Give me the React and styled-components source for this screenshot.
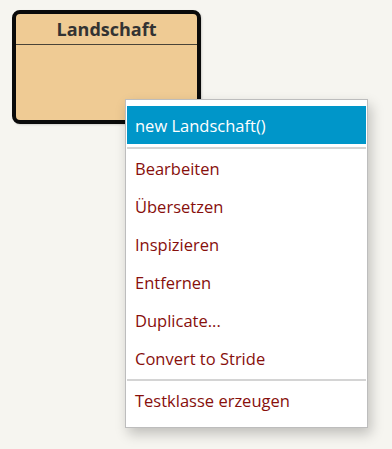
import React from 'react'
import styled, { createGlobalStyle } from 'styled-components'

const Global = createGlobalStyle`
  html, body { margin: 0; padding: 0; background: #f6f5f0; }
  body { font-family: "Open Sans", "Noto Sans", sans-serif; }
`

const items = ['Bearbeiten', 'Übersetzen', 'Inspizieren', 'Entfernen', 'Duplicate...', 'Convert to Stride']

export default function App() {
  return (
    <Canvas>
      <Global />
      <ClassBox>
        <ClassName>Landschaft</ClassName>
        <ClassBody>
          <Handle width="8" height="8" viewBox="0 0 8 8">
            <path d="M7 1 L1 7 M7 4 L4 7" stroke="#333" strokeWidth="1" />
          </Handle>
        </ClassBody>
      </ClassBox>
      <Menu>
        <Item $active>new Landschaft()</Item>
        <Sep $top={3} />
        {items.map(t => <Item key={t}>{t}</Item>)}
        <Sep $top={2} />
        <Item>Testklasse erzeugen</Item>
      </Menu>
    </Canvas>
  )
}

const Canvas = styled.div`
  position: relative;
  width: 392px;
  height: 449px;
  overflow: hidden;
`

const ClassBox = styled.div`
  position: absolute;
  left: 12px;
  top: 10px;
  width: 189px;
  height: 114px;
  box-sizing: border-box;
  border: 4px solid #0a0a0a;
  border-radius: 8px;
  background: #efcb94;
  display: flex;
  flex-direction: column;
  box-shadow: 1px 1px 2px rgba(0,0,0,0.15);
`

const ClassName = styled.div`
  height: 30px;
  border-bottom: 1px solid #4a4438;
  display: flex;
  align-items: center;
  justify-content: center;
  font-family: "Open Sans", sans-serif;
  font-weight: 700;
  font-size: 18px;
  color: #333333;
`

const ClassBody = styled.div`
  flex: 1;
  position: relative;
`

const Handle = styled.svg`
  position: absolute;
  right: 1px;
  bottom: 1px;
`

const Menu = styled.div`
  position: absolute;
  left: 125px;
  top: 99px;
  width: 243px;
  box-sizing: border-box;
  border: 1px solid #bdbdbd;
  background: #fff;
  padding: 6px 1px 8px;
  box-shadow: 3px 6px 12px rgba(0,0,0,0.22);
  display: flex;
  flex-direction: column;
`

const Item = styled.div`
  height: 38px;
  display: flex;
  align-items: center;
  padding-left: 8px;
  font-size: 16.5px;
  color: ${p => (p.$active ? '#ffffff' : '#870f0c')};
  background: ${p => (p.$active ? '#0096c9' : 'transparent')};
`

const Sep = styled.div`
  height: 2px;
  margin-top: ${p => p.$top}px;
  background: #d4d4d4;
`
